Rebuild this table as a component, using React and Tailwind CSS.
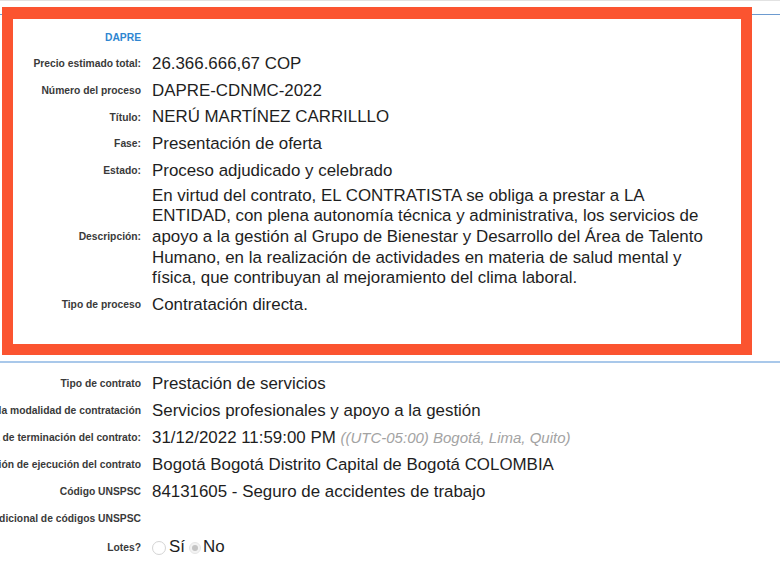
import React from 'react'

const font = { fontFamily: '"Liberation Sans", Arial, sans-serif' }

function Label({ children }) {
  return (
    <div className="flex w-[141px] shrink-0 justify-end">
      <span className="whitespace-nowrap text-[10.3px] font-bold leading-3 text-[#3a3a3a]">{children}</span>
    </div>
  )
}

function Row({ label, children, className = '' }) {
  return (
    <div className={`flex items-center ${className}`}>
      <Label>{label}</Label>
      <div className="ml-[11px] text-[16.9px] leading-[20.7px] text-[#1e1e1e]">{children}</div>
    </div>
  )
}

const topRows = [
  ['Precio estimado total:', '26.366.666,67 COP'],
  ['Número del proceso', 'DAPRE-CDNMC-2022'],
  ['Título:', 'NERÚ MARTÍNEZ CARRILLLO'],
  ['Fase:', 'Presentación de oferta'],
  ['Estado:', 'Proceso adjudicado y celebrado'],
]

export default function App() {
  return (
    <div className="h-[565px] w-[780px] overflow-hidden bg-white" style={font}>
      <div className="h-px bg-[#e2e2e2]" />

      {/* highlighted block */}
      <div className="mt-[6px] flex items-start">
        <div className="mt-[7px] w-[2px] border-t border-[#6d9bd0]" />
        <div className="w-[750px] border-x-[11px] border-t-[12px] border-b-[11px] border-[#fb5430] bg-white">
          <div className="pt-[13px] pb-[7px]">
            <div className="flex w-[128px] justify-end">
              <span className="text-[10.3px] font-bold leading-3 text-[#2f86d1]">DAPRE</span>
            </div>
          </div>
          <div className="ml-[-13px]">
            {topRows.map(([l, v]) => (
              <Row key={l} label={l} className="py-[3px]">{v}</Row>
            ))}
            <Row label="Descripción:" className="pt-[1px] pb-[3px]">
              <div className="w-[566px]">
                En virtud del contrato, EL CONTRATISTA se obliga a prestar a LA ENTIDAD, con plena autonomía técnica y
                administrativa, los servicios de apoyo a la gestión al Grupo de Bienestar y Desarrollo del Área de
                Talento Humano, en la realización de actividades en materia de salud mental y física, que contribuyan
                al mejoramiento del clima laboral.
              </div>
            </Row>
            <Row label="Tipo de proceso" className="py-[3px]">Contratación directa.</Row>
            <div className="h-[25px]" />
          </div>
        </div>
        <div className="mt-[7px] flex-1 border-t border-[#6d9bd0]" />
      </div>

      <div className="mt-[6px] h-[2px] bg-[#a9c8ea]" />

      {/* lower rows */}
      <div className="pt-[8px]">
        <Row label="Tipo de contrato" className="h-[27px]">Prestación de servicios</Row>
        <Row label="Justificación de la modalidad de contratación" className="h-[27px]">
          Servicios profesionales y apoyo a la gestión
        </Row>
        <Row label="Fecha de terminación del contrato:" className="h-[27px]">
          31/12/2022 11:59:00 PM{' '}
          <span className="text-[15px] italic text-[#a3a3a3]">((UTC-05:00) Bogotá, Lima, Quito)</span>
        </Row>
        <Row label="Dirección de ejecución del contrato" className="h-[27px]">
          Bogotá Bogotá Distrito Capital de Bogotá COLOMBIA
        </Row>
        <Row label="Código UNSPSC" className="h-[27px]">84131605 - Seguro de accidentes de trabajo</Row>
        <Row label="Lista adicional de códigos UNSPSC" className="h-[27px]" />
        <Row label="Lotes?" className="h-[30px]">
          <div className="flex items-center">
            <span className="h-[14px] w-[14px] rounded-full border border-[#d4d4d4] bg-white" />
            <span className="ml-[3px]">Sí</span>
            <span className="ml-[4px] flex h-[12px] w-[12px] items-center justify-center rounded-full border border-[#e6e6e6] bg-[#f3f3f3]">
              <span className="h-[6px] w-[6px] rounded-full bg-[#c4c4c4]" />
            </span>
            <span className="ml-[2px]">No</span>
          </div>
        </Row>
      </div>
    </div>
  )
}
